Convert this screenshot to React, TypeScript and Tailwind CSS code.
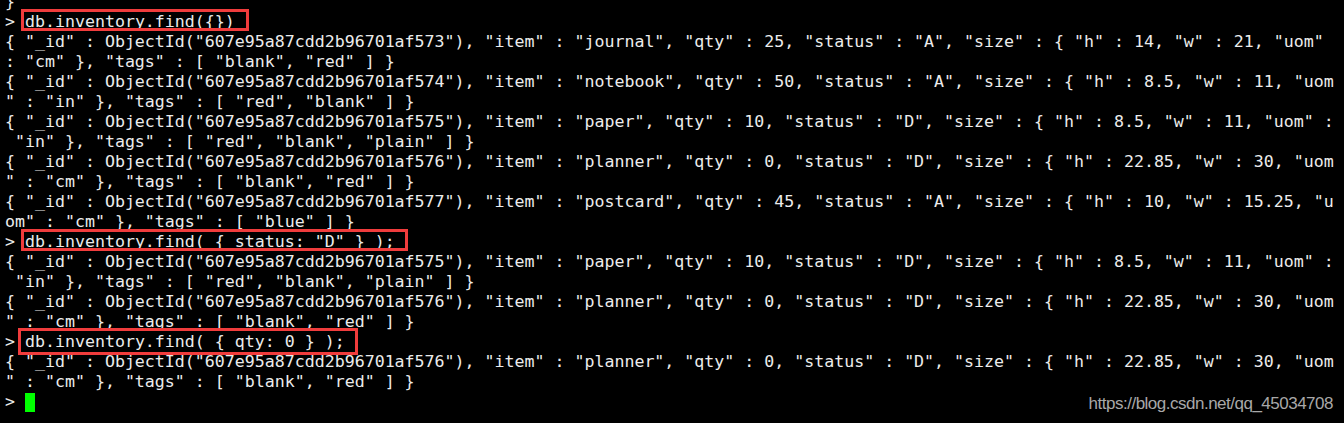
import React from "react";

type Row =
  | { kind: "out"; text: string }
  | { kind: "cmd"; text: string; box: string }
  | { kind: "cursor" };

const line = (text: string): Row => ({ kind: "out", text });

const journal =
  '{ "_id" : ObjectId("607e95a87cdd2b96701af573"), "item" : "journal", "qty" : 25, "status" : "A", "size" : { "h" : 14, "w" : 21, "uom"';
const notebook =
  '{ "_id" : ObjectId("607e95a87cdd2b96701af574"), "item" : "notebook", "qty" : 50, "status" : "A", "size" : { "h" : 8.5, "w" : 11, "uom';
const paper =
  '{ "_id" : ObjectId("607e95a87cdd2b96701af575"), "item" : "paper", "qty" : 10, "status" : "D", "size" : { "h" : 8.5, "w" : 11, "uom" :';
const planner =
  '{ "_id" : ObjectId("607e95a87cdd2b96701af576"), "item" : "planner", "qty" : 0, "status" : "D", "size" : { "h" : 22.85, "w" : 30, "uom';
const postcard =
  '{ "_id" : ObjectId("607e95a87cdd2b96701af577"), "item" : "postcard", "qty" : 45, "status" : "A", "size" : { "h" : 10, "w" : 15.25, "u';

const rows: Row[] = [
  line("}"),
  {
    kind: "cmd",
    text: "db.inventory.find({})",
    box: "-left-[4px] -right-[14px] -top-[3px] bottom-0",
  },
  line(journal),
  line(': "cm" }, "tags" : [ "blank", "red" ] }'),
  line(notebook),
  line('" : "in" }, "tags" : [ "red", "blank" ] }'),
  line(paper),
  line(' "in" }, "tags" : [ "red", "blank", "plain" ] }'),
  line(planner),
  line('" : "cm" }, "tags" : [ "blank", "red" ] }'),
  line(postcard),
  line('om" : "cm" }, "tags" : [ "blue" ] }'),
  {
    kind: "cmd",
    text: 'db.inventory.find( { status: "D" } );',
    box: "-left-[4px] -right-[13px] -top-[3px] bottom-0",
  },
  line(paper),
  line(' "in" }, "tags" : [ "red", "blank", "plain" ] }'),
  line(planner),
  line('" : "cm" }, "tags" : [ "blank", "red" ] }'),
  {
    kind: "cmd",
    text: "db.inventory.find( { qty: 0 } );",
    box: "-left-[7px] -right-[13px] -top-[4px] -bottom-[4px]",
  },
  line(planner),
  line('" : "cm" }, "tags" : [ "blank", "red" ] }'),
  { kind: "cursor" },
];

const App: React.FC = (): JSX.Element => {
  return (
    <div className="relative w-[1344px] h-[423px] overflow-hidden bg-black">
      <div className="flex flex-col -mt-[8px] pl-[5px] font-['DejaVu_Sans_Mono','Liberation_Mono',monospace] text-[16.6px] leading-[20px] text-[#ececec]">
        {rows.map((row, index) => {
          if (row.kind === "out") {
            return (
              <div key={index} className="h-[20px] whitespace-pre">
                {row.text}
              </div>
            );
          }
          if (row.kind === "cmd") {
            return (
              <div key={index} className="h-[20px] whitespace-pre">
                {"> "}
                <span className="relative">
                  {row.text}
                  <span
                    className={`absolute border-[3px] border-[#f03c3c] ${row.box}`}
                  />
                </span>
              </div>
            );
          }
          return (
            <div key={index} className="flex h-[20px] items-center whitespace-pre">
              {"> "}
              <span className="inline-block w-[10px] h-[19px] mt-[1px] bg-[#00ff00]" />
            </div>
          );
        })}
      </div>

      {/* csdn watermark */}
      <div className="absolute top-[394px] right-[11px] font-['Liberation_Sans',Arial,sans-serif] text-[17px] leading-[20px] tracking-[-0.5px] text-[#a8a8a8]">
        https://blog.csdn.net/qq_45034708
      </div>
    </div>
  );
};

export default App;
